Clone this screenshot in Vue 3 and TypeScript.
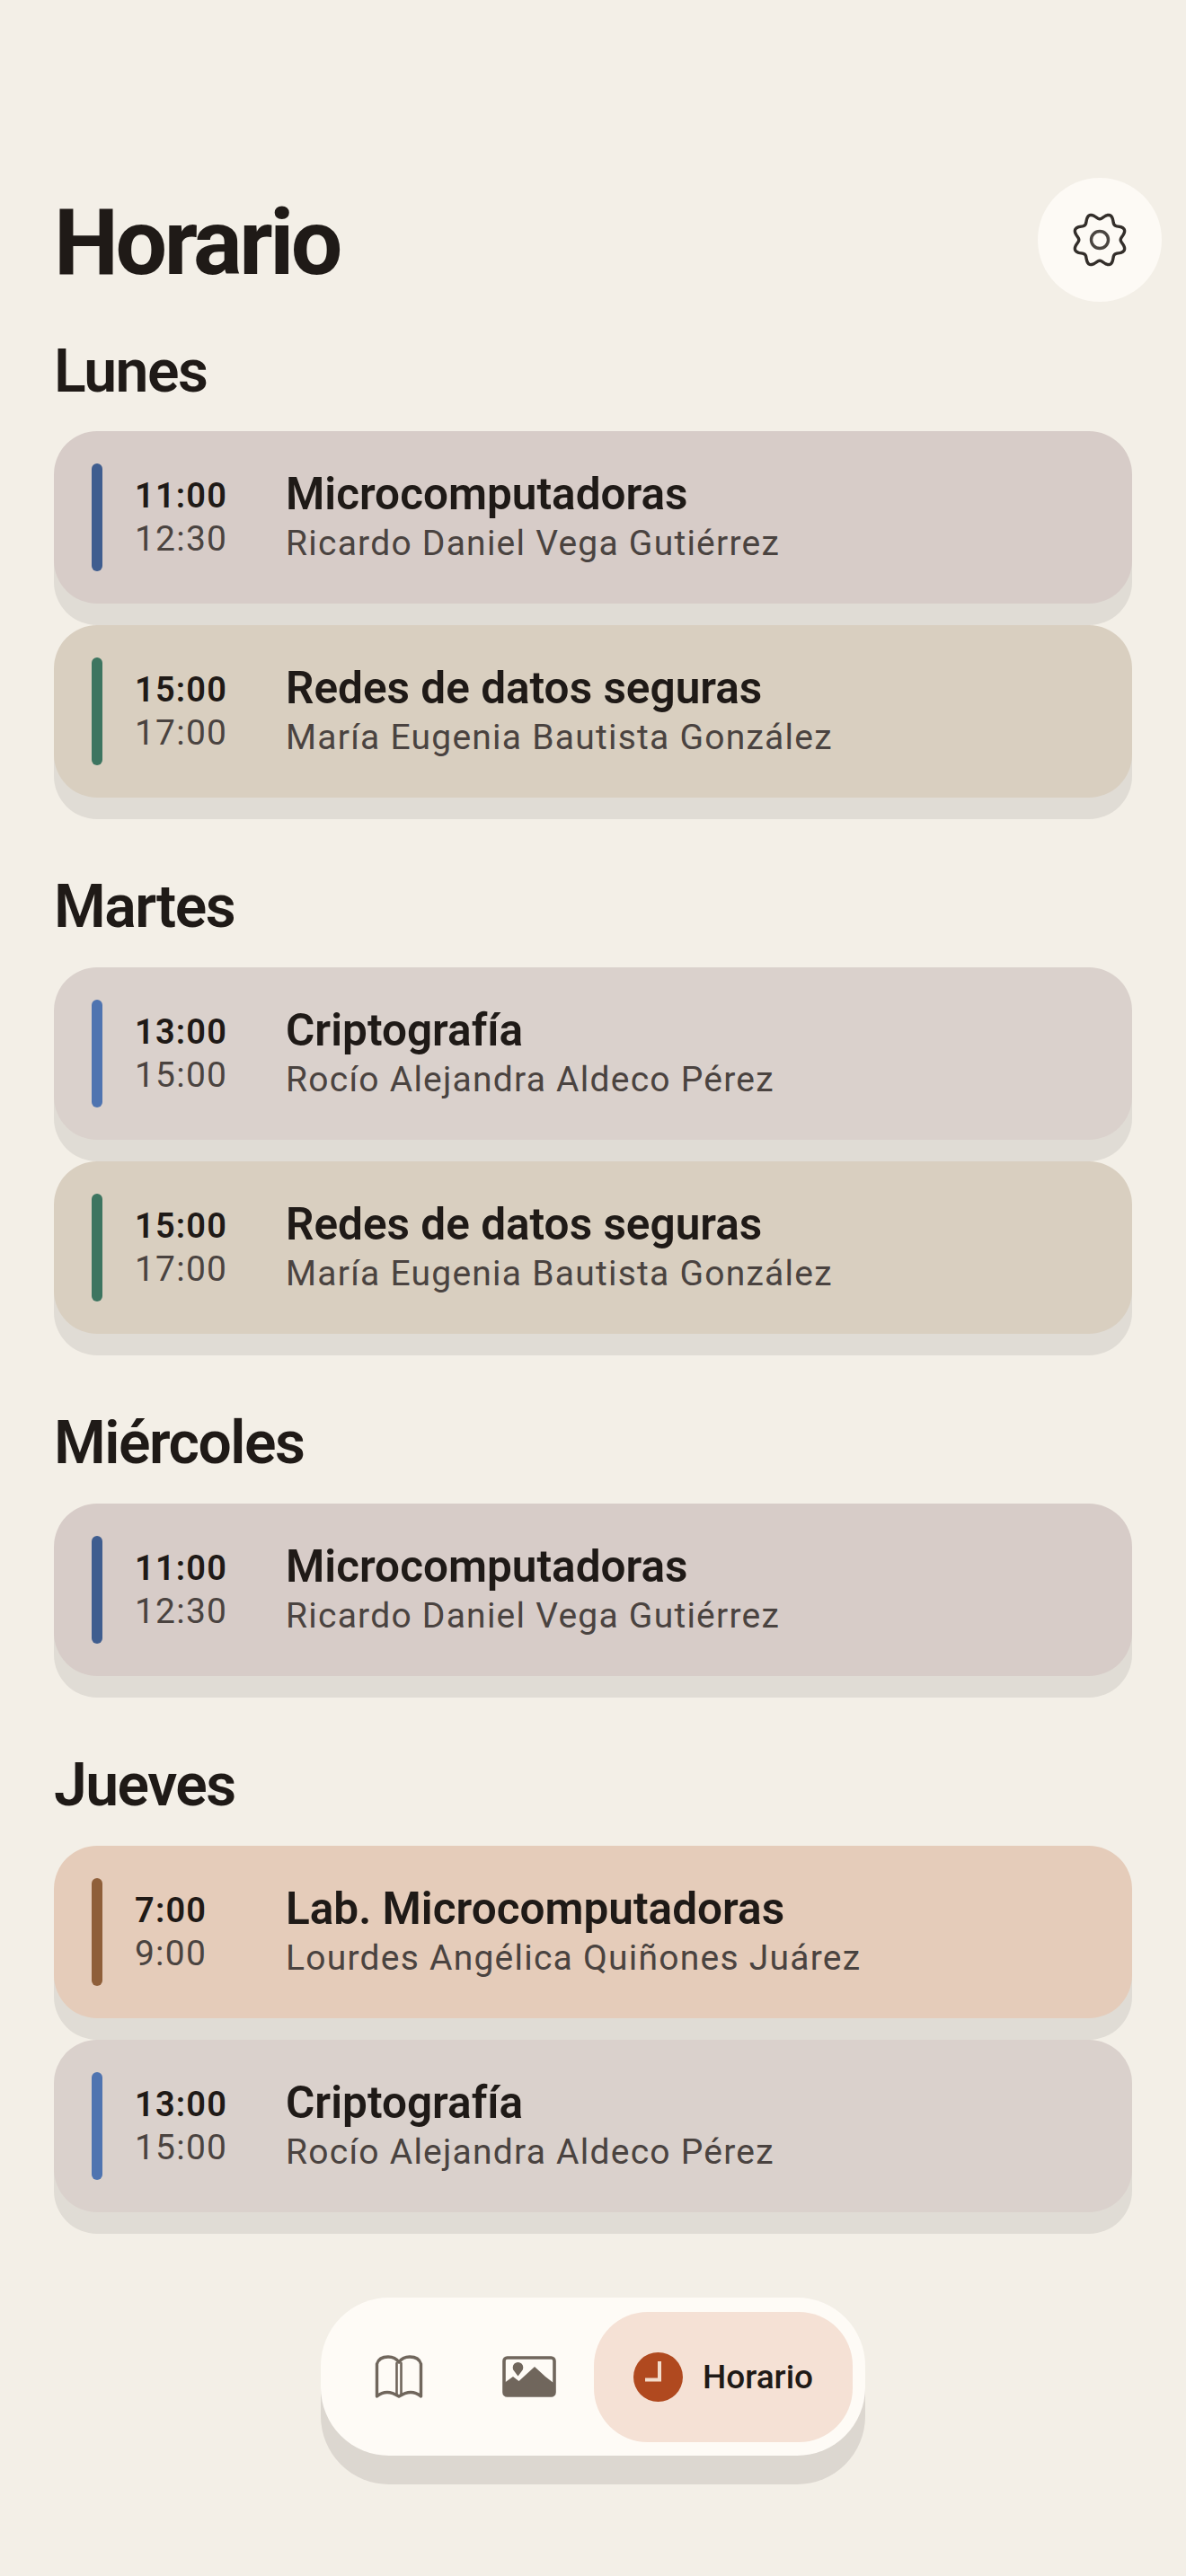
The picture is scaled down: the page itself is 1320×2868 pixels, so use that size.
<script setup lang="ts">
interface Clase {
  start: string;
  end: string;
  name: string;
  teacher: string;
  tone: string;
}

interface Dia {
  label: string;
  clases: Clase[];
}

const micro: Clase = { start: '11:00', end: '12:30', name: 'Microcomputadoras', teacher: 'Ricardo Daniel Vega Gutiérrez', tone: 'micro' };
const redes: Clase = { start: '15:00', end: '17:00', name: 'Redes de datos seguras', teacher: 'María Eugenia Bautista González', tone: 'redes' };
const cripto: Clase = { start: '13:00', end: '15:00', name: 'Criptografía', teacher: 'Rocío Alejandra Aldeco Pérez', tone: 'cripto' };
const lab: Clase = { start: '7:00', end: '9:00', name: 'Lab. Microcomputadoras', teacher: 'Lourdes Angélica Quiñones Juárez', tone: 'lab' };

const dias: Dia[] = [
  { label: 'Lunes', clases: [micro, redes] },
  { label: 'Martes', clases: [cripto, redes] },
  { label: 'Miércoles', clases: [micro] },
  { label: 'Jueves', clases: [lab, cripto] },
];

// gear outline: eight lobes around the centre
const gearPath = (() => {
  const pts: string[] = [];
  for (let i = 0; i < 160; i++) {
    const a = (i / 160) * Math.PI * 2;
    const r = 26.4 - 3.2 * Math.cos(8 * a);
    pts.push(`${(33 + r * Math.sin(a)).toFixed(2)} ${(33 - r * Math.cos(a)).toFixed(2)}`);
  }
  return `M${pts.join('L')}Z`;
})();
</script>

<template>
  <div class="page">
    <header class="header">
      <h1 class="title">Horario</h1>
      <button class="settings" aria-label="Ajustes">
        <svg width="66" height="66" viewBox="0 0 66 66" fill="none" stroke="#332e2a" stroke-width="3.4" stroke-linejoin="round">
          <path :d="gearPath" />
          <circle cx="33" cy="33" r="9.500" stroke="#4a4540" stroke-width="3.4" />
        </svg>
      </button>
    </header>

    <section v-for="dia in dias" :key="dia.label" class="day">
      <h2 class="day-label">{{ dia.label }}</h2>
      <div class="day-list">
        <article v-for="(clase, i) in dia.clases" :key="i" :class="['card', clase.tone]">
          <span class="bar"></span>
          <div class="times">
            <span class="time-start">{{ clase.start }}</span>
            <span class="time-end">{{ clase.end }}</span>
          </div>
          <div class="info">
            <span class="name">{{ clase.name }}</span>
            <span class="teacher">{{ clase.teacher }}</span>
          </div>
        </article>
      </div>
    </section>

    <nav class="nav">
      <div class="nav-item book">
        <svg width="56" height="48" viewBox="0 0 56 48" fill="none" stroke="#70665c" stroke-width="3.4" stroke-linejoin="round" stroke-linecap="round">
          <path d="M28 8C25 3.500 21 2 16 2 10 2 5 4.500 3.500 10V46C7 43 12 41.500 15 41.500 19 41.500 24 43.500 28 46 32 43.500 37 41.500 41 41.500 44 41.500 49 43 52.500 46V10C51 4.500 46 2 40 2 35 2 31 3.500 28 8Z" />
          <path d="M25.500 9V44M30.500 9V44" stroke-width="2.600" />
        </svg>
      </div>
      <div class="nav-item">
        <svg width="60" height="46" viewBox="0 0 60 46">
          <rect x="2" y="2" width="56" height="42" rx="3.500" fill="none" stroke="#70665c" stroke-width="3.600" />
          <path d="M3 44V29.500L12 23l6.500 5L36 12l12 11 9 7V44Z" fill="#70665c" />
          <path d="M17.500 22.500l-4.500-6a5.800 5.800 0 1 1 9 0Z" fill="#70665c" />
        </svg>
      </div>
      <div class="nav-active">
        <svg width="55" height="55" viewBox="0 0 55 55">
          <circle cx="27.500" cy="27.500" r="27.500" fill="#b0491f" />
          <path d="M29 10V30.500H13" fill="none" stroke="#f3dccb" stroke-width="4" />
        </svg>
        <span class="nav-label">Horario</span>
      </div>
    </nav>
  </div>
</template>

<style scoped>
.page {
  box-sizing: border-box;
  width: 1320px;
  height: 2868px;
  padding: 198px 60px 0;
  background: #f3efe7;
  font-family: Roboto, "Liberation Sans", sans-serif;
  color: #1f1a17;
}

.header {
  display: flex;
  align-items: center;
  justify-content: space-between;
  height: 138px;
  margin-right: -33px;
}

.title {
  margin: 0;
  padding-top: 5px;
  font-size: 102px;
  line-height: 120px;
  font-weight: 700;
  letter-spacing: -3.400px;
}

.settings {
  display: flex;
  align-items: center;
  justify-content: center;
  width: 138px;
  height: 138px;
  padding: 0;
  border: none;
  border-radius: 50%;
  background: #fdfaf5;
}

.day {
  margin-bottom: 80px;
}

.header + .day {
  margin-top: 36px;
}

.day-label {
  margin: 0 0 26px;
  padding-top: 2px;
  font-size: 66px;
  line-height: 80px;
  font-weight: 600;
  letter-spacing: -1.500px;
}

.day + .day .day-label {
  margin-bottom: 27px;
}

.day-list {
  display: flex;
  flex-direction: column;
  gap: 24px;
}

.card {
  display: flex;
  align-items: center;
  height: 192px;
  padding-left: 42px;
  border-radius: 48px;
  box-shadow: 0 24px 0 #e0dcd5;
}

.micro { background: #d7ccc8; }
.redes { background: #d9cfc0; }
.cripto { background: #dad1cc; }
.lab { background: #e5ccba; }

.bar {
  flex: none;
  width: 12px;
  height: 120px;
  border-radius: 6px;
  background: #3f5d8f;
}

.redes .bar { background: #3d7560; }
.cripto .bar { background: #4f74b0; }
.lab .bar { background: #8f5f3a; }

.times {
  display: flex;
  flex-direction: column;
  flex: none;
  width: 168px;
  margin-left: 36px;
  font-size: 39px;
  line-height: 48px;
  letter-spacing: 1.200px;
}

.time-start {
  font-size: 38px;
  font-weight: 600;
}

.time-end {
  color: #4a4340;
}

.info {
  display: flex;
  flex-direction: column;
}

.name {
  margin-top: -2px;
  font-size: 49.500px;
  line-height: 58px;
  font-weight: 600;
}

.teacher {
  margin-top: 2px;
  font-size: 39px;
  line-height: 48px;
  letter-spacing: 1.240px;
  color: #4a4340;
}

.nav {
  box-sizing: border-box;
  display: flex;
  align-items: center;
  width: 606px;
  height: 176px;
  margin: 95px auto 0;
  border-radius: 76px;
  background: #fefbf6;
  box-shadow: 0 32px 0 #dcd7d0;
}

.nav-item {
  display: flex;
  align-items: center;
  justify-content: center;
  flex: none;
  width: 116px;
}

.nav-item.book {
  width: 174px;
}

.nav-active {
  display: flex;
  align-items: center;
  flex: none;
  gap: 22px;
  box-sizing: border-box;
  width: 288px;
  height: 145px;
  margin-left: 14px;
  padding-left: 44px;
  border-radius: 60px;
  background: #f5e1d5;
}

.nav-label {
  font-size: 37px;
  font-weight: 500;
}
</style>
